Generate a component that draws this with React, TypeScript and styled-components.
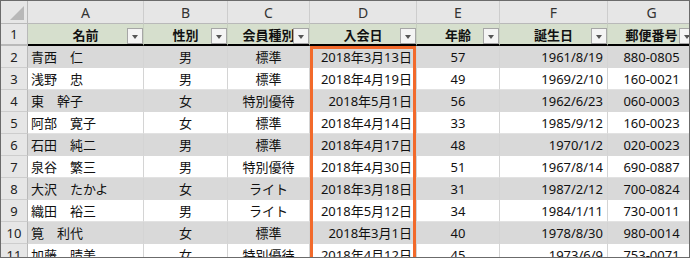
import React from "react";
import styled, { createGlobalStyle } from "styled-components";

const Global = createGlobalStyle`
  html, body { margin: 0; padding: 0; background: #fff; }
  body { font-family: "Noto Sans", "Noto Sans CJK JP", sans-serif; }
`;

const Frame = styled.div`
  position: relative;
  width: 690px;
  height: 258px;
  box-sizing: border-box;
  border: 1px solid #6b6b6b;
  overflow: hidden;
  background: #fff;
`;

const Sheet = styled.div`
  display: grid;
  grid-template-columns: 27px 116px 84px 82px 107px 83px 108px 88px;
  grid-auto-rows: 22px;
  grid-template-rows: 23px 22px;
  width: max-content;
`;

const Corner = styled.div`
  position: relative;
  background: #e6e6e6;
  border-right: 1px solid #b9b9b9;
  border-bottom: 1px solid #b9b9b9;
  box-sizing: border-box;
  &::after {
    content: "";
    position: absolute;
    right: 3px;
    bottom: 3px;
    width: 0;
    height: 0;
    border-left: 14px solid transparent;
    border-bottom: 14px solid #b8b8b8;
  }
`;

const ColHead = styled.div`
  background: #e6e6e6;
  border-right: 1px solid #cdcdcd;
  border-bottom: 1px solid #b9b9b9;
  box-sizing: border-box;
  display: flex;
  align-items: center;
  justify-content: center;
  font-family: "Noto Sans", sans-serif;
  font-size: 14px;
  color: #333;
`;

const RowHead = styled.div`
  background: #e6e6e6;
  border-right: 1px solid #b9b9b9;
  border-bottom: 1px solid #cdcdcd;
  box-sizing: border-box;
  display: flex;
  align-items: center;
  justify-content: center;
  font-family: "Noto Sans", sans-serif;
  font-size: 13px;
  color: #222;
`;

const TitleRowHead = styled(RowHead)`
  border-bottom: 2px solid #b9b9b9;
`;

const HeadCell = styled.div`
  position: relative;
  background: #d6dfcd;
  border-right: 1px solid #c6cfbe;
  border-bottom: 2px solid #000;
  box-sizing: border-box;
  display: flex;
  align-items: center;
  justify-content: center;
  font-size: 13px;
  font-weight: 700;
  color: #111;
  white-space: nowrap;
`;

const FilterButton = styled.span`
  position: absolute;
  right: 0;
  bottom: 0;
  width: 16px;
  height: 16px;
  box-sizing: border-box;
  border: 1px solid #a6a6a6;
  background: #f4f4f4;
  display: flex;
  align-items: center;
  justify-content: center;
  &::before {
    content: "";
    width: 0;
    height: 0;
    border-left: 3.5px solid transparent;
    border-right: 3.5px solid transparent;
    border-top: 4px solid #555;
    margin-top: 1px;
  }
`;

type Align = "left" | "center" | "right";

const Cell = styled.div<{ $align: Align; $shade: boolean }>`
  background: ${(p) => (p.$shade ? "#d9d9d9" : "#ffffff")};
  border-right: 1px solid #d4d4d4;
  border-bottom: 1px solid ${(p) => (p.$shade ? "#d9d9d9" : "#e2e2e2")};
  box-sizing: border-box;
  display: flex;
  align-items: center;
  justify-content: ${(p) =>
    p.$align === "left" ? "flex-start" : p.$align === "right" ? "flex-end" : "center"};
  padding: 0 ${(p) => (p.$align === "right" ? "4px" : "0")} 0
    ${(p) => (p.$align === "left" ? "3px" : "0")};
  font-size: 13px;
  color: #111;
  white-space: nowrap;
  overflow: hidden;
`;

const Highlight = styled.div`
  position: absolute;
  left: 309px;
  top: 45px;
  width: 106px;
  height: 260px;
  box-sizing: border-box;
  border: 3px solid #f26a2b;
  pointer-events: none;
`;

const letters = ["A", "B", "C", "D", "E", "F", "G"];
const headers = ["名前", "性別", "会員種別", "入会日", "年齢", "誕生日", "郵便番号"];
const aligns: Align[] = ["left", "center", "center", "right", "center", "right", "center"];

const rows: string[][] = [
  ["青西　仁", "男", "標準", "2018年3月13日", "57", "1961/8/19", "880-0805"],
  ["浅野　忠", "男", "標準", "2018年4月19日", "49", "1969/2/10", "160-0021"],
  ["東　幹子", "女", "特別優待", "2018年5月1日", "56", "1962/6/23", "060-0003"],
  ["阿部　寛子", "女", "標準", "2018年4月14日", "33", "1985/9/12", "160-0023"],
  ["石田　純二", "男", "標準", "2018年4月17日", "48", "1970/1/2", "020-0023"],
  ["泉谷　繁三", "男", "特別優待", "2018年4月30日", "51", "1967/8/14", "690-0887"],
  ["大沢　たかよ", "女", "ライト", "2018年3月18日", "31", "1987/2/12", "700-0824"],
  ["織田　裕三", "男", "ライト", "2018年5月12日", "34", "1984/1/11", "730-0011"],
  ["筧　利代", "女", "標準", "2018年3月1日", "40", "1978/8/30", "980-0014"],
  ["加藤　晴美", "女", "特別優待", "2018年4月12日", "45", "1973/6/9", "753-0071"],
];

export default function App() {
  return (
    <>
      <Global />
      <Frame>
        <Sheet>
          <Corner />
          {letters.map((l) => (
            <ColHead key={l}>{l}</ColHead>
          ))}
          <TitleRowHead>1</TitleRowHead>
          {headers.map((h) => (
            <HeadCell key={h}>
              {h}
              <FilterButton />
            </HeadCell>
          ))}
          {rows.map((r, i) => (
            <React.Fragment key={i}>
              <RowHead>{i + 2}</RowHead>
              {r.map((v, j) => (
                <Cell key={j} $align={aligns[j]} $shade={i % 2 === 0}>
                  {v}
                </Cell>
              ))}
            </React.Fragment>
          ))}
        </Sheet>
        <Highlight />
      </Frame>
    </>
  );
}
